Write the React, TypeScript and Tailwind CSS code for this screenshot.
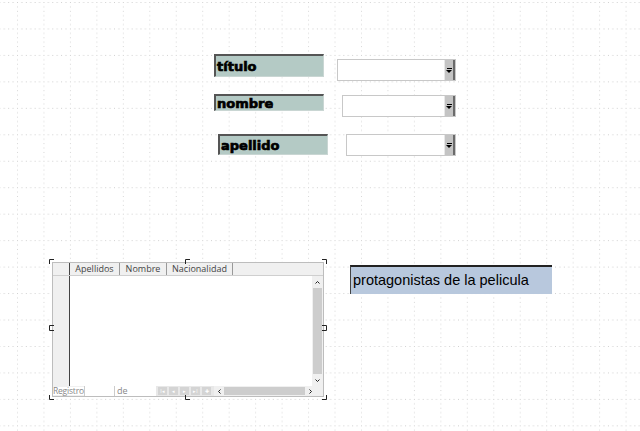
import React from "react";

const labelFont = { fontFamily: '"DejaVu Sans", "Liberation Sans", sans-serif' };

function Label({ text, className }: { text: string; className: string }) {
  return (
    <div
      className={`absolute flex items-center border-t-2 border-l-2 border-t-[#555] border-l-[#555] border-r border-b border-r-[#c9d6d3] border-b-[#c9d6d3] bg-[#b4cac5] pl-px text-[13px] font-bold leading-none text-black [-webkit-text-stroke:0.7px_black] ${className}`}
      style={labelFont}
    >
      {text}
    </div>
  );
}

function Combo({ className }: { className: string }) {
  return (
    <div className={`absolute flex border border-[#c8c8c8] bg-white ${className}`}>
      <div className="flex-1" />
      <div className="flex w-[11px] items-center justify-center border-l border-l-[#e8e8e8] border-r-2 border-r-[#6a6a6a] bg-[#c4c4c4]">
        <div className="flex flex-col items-center">
          <div className="h-px w-[5px] bg-black" />
          <div className="mt-px h-0 w-0 border-x-[3px] border-t-[3px] border-x-transparent border-t-black" />
        </div>
      </div>
    </div>
  );
}

function Handle({ className, d }: { className: string; d: string }) {
  return (
    <svg className={`absolute ${className}`} width="6" height="6" viewBox="0 0 6 6">
      <path d={d} stroke="#222" strokeWidth="1" fill="none" />
    </svg>
  );
}

function Chevron({ d }: { d: string }) {
  return (
    <svg width="7" height="7" viewBox="0 0 7 7">
      <path d={d} stroke="#222" strokeWidth="1" fill="none" />
    </svg>
  );
}

export default function App() {
  const gridFont = { fontFamily: '"Open Sans", "Liberation Sans", sans-serif' };
  return (
    <div className="relative h-[431px] w-[640px] overflow-hidden bg-white">
      <svg className="absolute inset-0" width="640" height="431">
        <defs>
          <pattern id="g" x="17" y="2" width="26.46" height="26.46" patternUnits="userSpaceOnUse">
            {[0, 1, 2, 3, 4, 5].map((i) => (
              <rect key={"h" + i} x={i * 4.41} y="0" width="1" height="1" fill="#cfcfcf" />
            ))}
            {[1, 2, 3, 4, 5].map((i) => (
              <rect key={"v" + i} x="0" y={i * 4.41} width="1" height="1" fill="#d6d6d6" />
            ))}
          </pattern>
        </defs>
        <rect width="640" height="431" fill="url(#g)" />
      </svg>

      <Label text="título" className="left-[214px] top-[54px] h-[23px] w-[110px]" />
      <Combo className="left-[337px] top-[59px] h-[22px] w-[119px]" />

      <Label text="nombre" className="left-[214px] top-[94px] h-[17px] w-[110px]" />
      <Combo className="left-[342px] top-[95px] h-[22px] w-[114px]" />

      <Label text="apellido" className="left-[218px] top-[134px] h-[21px] w-[110px]" />
      <Combo className="left-[346px] top-[134px] h-[22px] w-[110px]" />

      <div
        className="absolute left-[350px] top-[265px] flex h-[29px] w-[202px] items-center border-t-2 border-l border-t-[#222] border-l-[#444] bg-[#b8c8dd] pl-[2px] text-[14.5px] text-black"
        style={{ fontFamily: '"Liberation Sans", sans-serif' }}
      >
        protagonistas de la pelicula
      </div>

      {/* table control */}
      <div
        className="absolute left-[52px] top-[262px] flex h-[135px] w-[272px] flex-col border border-[#bdbdbd] bg-white text-[9px] text-[#444]"
        style={gridFont}
      >
        <div className="flex h-[13px] border-b border-b-[#cfcfcf] bg-[#f0f0f0]">
          <div className="w-[17px] border-r border-r-[#444]" />
          <div className="flex w-[50px] items-center justify-center border-r border-r-[#999]">Apellidos</div>
          <div className="flex w-[47px] items-center justify-center border-r border-r-[#999]">Nombre</div>
          <div className="flex w-[66px] items-center justify-center border-r border-r-[#999]">Nacionalidad</div>
          <div className="flex-1" />
        </div>
        <div className="flex flex-1">
          <div className="w-[17px] border-r border-r-[#444] bg-[#f0f0f0]" />
          <div className="flex-1" />
          <div className="flex w-[11px] flex-col items-center bg-[#f0f0f0]">
            <div className="flex h-[12px] items-center">
              <Chevron d="M1.5 4.5L3.5 2.5L5.5 4.5" />
            </div>
            <div className="w-[9px] flex-1 bg-[#cdcdcd]" />
            <div className="flex h-[12px] items-center">
              <Chevron d="M1.5 2.5L3.5 4.5L5.5 2.5" />
            </div>
          </div>
        </div>
        <div className="flex h-[10px] items-center bg-[#f0f0f0] leading-none">
          <div className="w-[31px] overflow-visible whitespace-nowrap bg-white text-[8.5px] tracking-[-0.2px] text-[#888]">
            Registro
          </div>
          <div className="h-full w-[31px] border-x border-x-[#ccc] bg-white" />
          <div className="h-full w-[41px] bg-white pl-[2px] text-[#888]">de</div>
          <div className="flex h-full w-[58px] items-center gap-[2px] bg-[#e8e8e8] pl-[2px]">
            {["I◂", "◂", "▸", "▸I", "✚"].map((s, i) => (
              <div key={i} className="flex h-[8px] w-[9px] items-center justify-center bg-[#d4d4d4] text-[5px] text-[#fff]">
                {s}
              </div>
            ))}
          </div>
          <div className="flex w-[10px] justify-center">
            <Chevron d="M4.5 1.5L2.5 3.5L4.5 5.5" />
          </div>
          <div className="h-[8px] w-[81px] bg-[#cdcdcd]" />
          <div className="flex w-[10px] justify-center">
            <Chevron d="M2.5 1.5L4.5 3.5L2.5 5.5" />
          </div>
          <div className="flex-1" />
        </div>
      </div>

      <Handle className="left-[49px] top-[259px]" d="M0.5 5V0.5H5" />
      <Handle className="left-[185px] top-[259px]" d="M0.5 5V0.5H5" />
      <Handle className="left-[321px] top-[259px]" d="M1 0.5H5.5V5" />
      <Handle className="left-[49px] top-[325px]" d="M5 0.5H0.5V5.5H5" />
      <Handle className="left-[321px] top-[325px]" d="M1 0.5H5.5V5.5H1" />
      <Handle className="left-[49px] top-[394px]" d="M0.5 1V5.5H5" />
      <Handle className="left-[185px] top-[394px]" d="M0.5 1V5.5H5" />
      <Handle className="left-[321px] top-[394px]" d="M1 5.5H5.5V1" />
    </div>
  );
}
